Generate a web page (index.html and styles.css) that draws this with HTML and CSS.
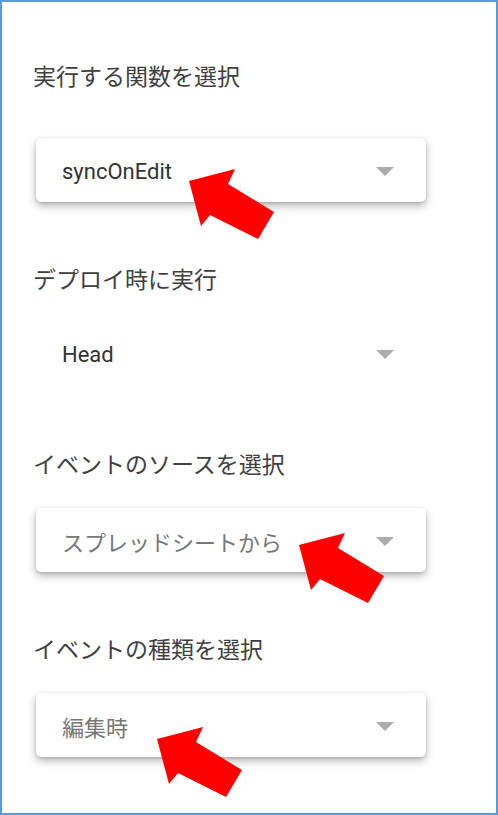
FILE: index.html
```html
<!DOCTYPE html>
<html>
<head>
    <title>トリガーを追加</title>
    <link rel="stylesheet" href="styles.css">
</head>
<body>
    <div class="panel">
        <div class="field first">
            <div class="field-label">実行する関数を選択</div>
            <div class="select card">
                <span class="select-value">syncOnEdit</span>
                <span class="caret"></span>
                <svg class="pointer pointer-1" width="86" height="72" viewBox="0 0 86 72"><path d="M0 12 L46 0 L39 15 L85 43 L69 70 L21 46 L12 57 Z" fill="#ff0000"/></svg>
            </div>
        </div>

        <div class="field">
            <div class="field-label">デプロイ時に実行</div>
            <div class="select flat">
                <span class="select-value">Head</span>
                <span class="caret"></span>
            </div>
        </div>

        <div class="field">
            <div class="field-label">イベントのソースを選択</div>
            <div class="select card">
                <span class="select-value muted">スプレッドシートから</span>
                <span class="caret"></span>
                <svg class="pointer pointer-2" width="86" height="72" viewBox="0 0 86 72"><path d="M0 12 L46 0 L39 15 L85 43 L69 70 L21 46 L12 57 Z" fill="#ff0000"/></svg>
            </div>
        </div>

        <div class="field">
            <div class="field-label">イベントの種類を選択</div>
            <div class="select card">
                <span class="select-value muted">編集時</span>
                <span class="caret"></span>
                <svg class="pointer pointer-3" width="86" height="72" viewBox="0 0 86 72"><path d="M0 12 L46 0 L39 15 L85 43 L69 70 L21 46 L12 57 Z" fill="#ff0000"/></svg>
            </div>
        </div>
    </div>
</body>
</html>
```

FILE: styles.css
```css
* {
    margin: 0;
    padding: 0;
    box-sizing: border-box;
}

body {
    background-color: #ffffff;
    font-family: Roboto, "Noto Sans CJK JP", sans-serif;
}

.panel {
    width: 498px;
    height: 815px;
    border: 2px solid #5b9bd5;
    padding: 58px 70px 0 31px;
    overflow: hidden;
}

.field {
    margin-top: 61px;
}

.field.first {
    margin-top: 0;
}

.field-label {
    font-family: "Noto Sans CJK JP", sans-serif;
    font-size: 23px;
    line-height: 30px;
    height: 30px;
    color: #3f3f3f;
    margin-bottom: 30px;
}

.field.first .field-label {
    margin-bottom: 48px;
}

.select {
    position: relative;
    display: flex;
    align-items: center;
    justify-content: space-between;
    height: 64px;
    margin-left: 3px;
    padding: 2px 32px 0 26px;
}

.select.card {
    background-color: #ffffff;
    border-radius: 5px;
    box-shadow: 0 4px 9px rgba(0, 0, 0, 0.28), 0 1px 3px rgba(0, 0, 0, 0.15);
}

.select.flat {
    padding-top: 0;
    padding-bottom: 2px;
}

.select-value {
    font-size: 22px;
    color: #333333;
}

.select-value.muted {
    color: #777777;
}

.caret {
    width: 0;
    height: 0;
    border-left: 9px solid transparent;
    border-right: 9px solid transparent;
    border-top: 9px solid #acacac;
}

.pointer {
    position: absolute;
    z-index: 2;
}

.pointer-1 {
    left: 153px;
    top: 31px;
}

.pointer-2 {
    left: 263px;
    top: 25px;
}

.pointer-3 {
    left: 121px;
    top: 34px;
}
```
